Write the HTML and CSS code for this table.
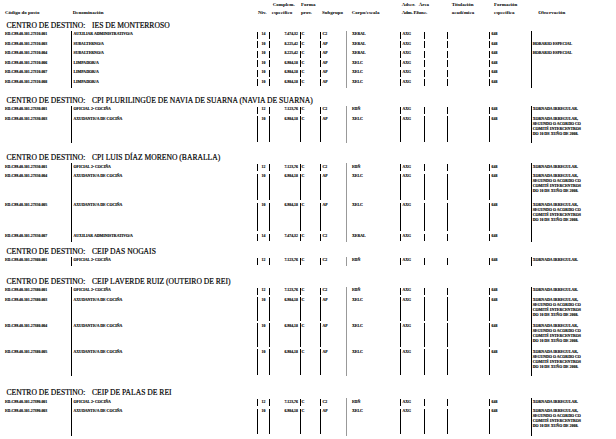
FILE: index.html
```html
<!DOCTYPE html>
<html lang="gl">
<head>
<meta charset="utf-8">
<title>Relación de postos</title>
<link rel="stylesheet" href="styles.css">
</head>
<body>
<div class="page">
  <div class="hdr">
    <div class="h h-code"><span></span><span>Código do posto</span></div>
    <div class="h h-den"><span></span><span>Denominación</span></div>
    <div class="h h-niv"><span></span><span>Niv.</span></div>
    <div class="h h-cmp"><span>Complem.</span><span>específico</span></div>
    <div class="h h-frm"><span>Forma</span><span>prov.</span></div>
    <div class="h h-sub"><span></span><span>Subgrupo</span></div>
    <div class="h h-crp"><span></span><span>Corpo/escala</span></div>
    <div class="h h-ads"><span>Adscr.</span><span class="adm">Adm. P.</span></div>
    <div class="h h-are"><span class="area">Área</span><span>func.</span></div>
    <div class="h h-tit"><span>Titulación</span><span>académica</span></div>
    <div class="h h-fes"><span>Formación</span><span>específica</span></div>
    <div class="h h-obs"><span></span><span>Observación</span></div>
  </div>

  <section class="sec s1">
    <div class="st"><span class="lbl">CENTRO DE DESTINO:</span><span>IES DE MONTERROSO</span></div>
    <div class="row">
      <div class="c code">ED.C99.40.101.27310.001</div><div class="c den">AUXILIAR ADMINISTRATIVO/A</div><div class="c niv s">14</div><div class="c cmp s">7.474,32</div><div class="c frm s">C</div><div class="c sub s">C2</div><div class="c crp">XERAL</div><div class="c ads s">AXG</div><div class="c are s"></div><div class="c tit s"></div><div class="c fes s">648</div><div class="c obs"></div>
    </div>
    <div class="row">
      <div class="c code">ED.C99.40.101.27310.003</div><div class="c den">SUBALTERNO/A</div><div class="c niv s">10</div><div class="c cmp s">8.225,42</div><div class="c frm s">C</div><div class="c sub s">AP</div><div class="c crp">XERAL</div><div class="c ads s">AXG</div><div class="c are s"></div><div class="c tit s"></div><div class="c fes s">648</div><div class="c obs">HORARIO ESPECIAL</div>
    </div>
    <div class="row">
      <div class="c code">ED.C99.40.101.27310.004</div><div class="c den">SUBALTERNO/A</div><div class="c niv s">10</div><div class="c cmp s">8.225,42</div><div class="c frm s">C</div><div class="c sub s">AP</div><div class="c crp">XERAL</div><div class="c ads s">AXG</div><div class="c are s"></div><div class="c tit s"></div><div class="c fes s">648</div><div class="c obs">HORARIO ESPECIAL</div>
    </div>
    <div class="row">
      <div class="c code">ED.C99.40.101.27310.006</div><div class="c den">LIMPADOR/A</div><div class="c niv s">10</div><div class="c cmp s">6.984,18</div><div class="c frm s">C</div><div class="c sub s">AP</div><div class="c crp">XELC</div><div class="c ads s">AXG</div><div class="c are s"></div><div class="c tit s"></div><div class="c fes s">648</div><div class="c obs"></div>
    </div>
    <div class="row">
      <div class="c code">ED.C99.40.101.27310.007</div><div class="c den">LIMPADOR/A</div><div class="c niv s">10</div><div class="c cmp s">6.984,18</div><div class="c frm s">C</div><div class="c sub s">AP</div><div class="c crp">XELC</div><div class="c ads s">AXG</div><div class="c are s"></div><div class="c tit s"></div><div class="c fes s">648</div><div class="c obs"></div>
    </div>
    <div class="row">
      <div class="c code">ED.C99.40.101.27310.008</div><div class="c den">LIMPADOR/A</div><div class="c niv s">10</div><div class="c cmp s">6.984,18</div><div class="c frm s">C</div><div class="c sub s">AP</div><div class="c crp">XELC</div><div class="c ads s">AXG</div><div class="c are s"></div><div class="c tit s"></div><div class="c fes s">648</div><div class="c obs"></div>
    </div>
  </section>

  <section class="sec s2">
    <div class="st"><span class="lbl">CENTRO DE DESTINO:</span><span>CPI PLURILINGÜE DE NAVIA DE SUARNA (NAVIA DE SUARNA)</span></div>
    <div class="row">
      <div class="c code">ED.C99.40.101.27330.001</div><div class="c den">OFICIAL 2ª COCIÑA</div><div class="c niv s">12</div><div class="c cmp s">7.123,76</div><div class="c frm s">C</div><div class="c sub s">C2</div><div class="c crp">EDÑ</div><div class="c ads s">AXG</div><div class="c are s"></div><div class="c tit s"></div><div class="c fes s">648</div><div class="c obs">XORNADA IRREGULAR.</div>
    </div>
    <div class="row t28">
      <div class="c code">ED.C99.40.101.27330.003</div><div class="c den">AXUDANTE/A DE COCIÑA</div><div class="c niv s">10</div><div class="c cmp s">6.984,18</div><div class="c frm s">C</div><div class="c sub s">AP</div><div class="c crp">XELC</div><div class="c ads s">AXG</div><div class="c are s"></div><div class="c tit s"></div><div class="c fes s">648</div><div class="c obs">XORNADA IRREGULAR,<br>SEGUNDO O ACORDO CO<br>COMITÉ INTERCENTROS<br>DO 10 DE XUÑO DE 2008.</div>
    </div>
  </section>

  <section class="sec s3">
    <div class="st"><span class="lbl">CENTRO DE DESTINO:</span><span>CPI LUIS DÍAZ MORENO (BARALLA)</span></div>
    <div class="row">
      <div class="c code">ED.C99.40.101.27350.001</div><div class="c den">OFICIAL 2ª COCIÑA</div><div class="c niv s">12</div><div class="c cmp s">7.123,76</div><div class="c frm s">C</div><div class="c sub s">C2</div><div class="c crp">EDÑ</div><div class="c ads s">AXG</div><div class="c are s"></div><div class="c tit s"></div><div class="c fes s">648</div><div class="c obs">XORNADA IRREGULAR.</div>
    </div>
    <div class="row t29">
      <div class="c code">ED.C99.40.101.27350.004</div><div class="c den">AXUDANTE/A DE COCIÑA</div><div class="c niv s">10</div><div class="c cmp s">6.984,18</div><div class="c frm s">C</div><div class="c sub s">AP</div><div class="c crp">XELC</div><div class="c ads s">AXG</div><div class="c are s"></div><div class="c tit s"></div><div class="c fes s">648</div><div class="c obs">XORNADA IRREGULAR,<br>SEGUNDO O ACORDO CO<br>COMITÉ INTERCENTROS<br>DO 10 DE XUÑO DE 2008.</div>
    </div>
    <div class="row t31">
      <div class="c code">ED.C99.40.101.27350.005</div><div class="c den">AXUDANTE/A DE COCIÑA</div><div class="c niv s">10</div><div class="c cmp s">6.984,18</div><div class="c frm s">C</div><div class="c sub s">AP</div><div class="c crp">XELC</div><div class="c ads s">AXG</div><div class="c are s"></div><div class="c tit s"></div><div class="c fes s">648</div><div class="c obs">XORNADA IRREGULAR,<br>SEGUNDO O ACORDO CO<br>COMITÉ INTERCENTROS<br>DO 10 DE XUÑO DE 2008.</div>
    </div>
    <div class="row">
      <div class="c code">ED.C99.40.101.27350.007</div><div class="c den">AUXILIAR ADMINISTRATIVO/A</div><div class="c niv s">14</div><div class="c cmp s">7.474,32</div><div class="c frm s">C</div><div class="c sub s">C2</div><div class="c crp">XERAL</div><div class="c ads s">AXG</div><div class="c are s"></div><div class="c tit s"></div><div class="c fes s">648</div><div class="c obs"></div>
    </div>
  </section>

  <section class="sec s4">
    <div class="st"><span class="lbl">CENTRO DE DESTINO:</span><span>CEIP DAS NOGAIS</span></div>
    <div class="row">
      <div class="c code">ED.C99.40.101.27360.001</div><div class="c den">OFICIAL 2ª COCIÑA</div><div class="c niv s">12</div><div class="c cmp s">7.123,76</div><div class="c frm s">C</div><div class="c sub s">C2</div><div class="c crp">EDÑ</div><div class="c ads s">AXG</div><div class="c are s"></div><div class="c tit s"></div><div class="c fes s">648</div><div class="c obs">XORNADA IRREGULAR.</div>
    </div>
  </section>

  <section class="sec s5">
    <div class="st"><span class="lbl">CENTRO DE DESTINO:</span><span>CEIP LAVERDE RUIZ (OUTEIRO DE REI)</span></div>
    <div class="row">
      <div class="c code">ED.C99.40.101.27380.001</div><div class="c den">OFICIAL 2ª COCIÑA</div><div class="c niv s">12</div><div class="c cmp s">7.123,76</div><div class="c frm s">C</div><div class="c sub s">C2</div><div class="c crp">EDÑ</div><div class="c ads s">AXG</div><div class="c are s"></div><div class="c tit s"></div><div class="c fes s">648</div><div class="c obs">XORNADA IRREGULAR.</div>
    </div>
    <div class="row t26">
      <div class="c code">ED.C99.40.101.27380.003</div><div class="c den">AXUDANTE/A DE COCIÑA</div><div class="c niv s">10</div><div class="c cmp s">6.984,18</div><div class="c frm s">C</div><div class="c sub s">AP</div><div class="c crp">XELC</div><div class="c ads s">AXG</div><div class="c are s"></div><div class="c tit s"></div><div class="c fes s">648</div><div class="c obs">XORNADA IRREGULAR,<br>SEGUNDO O ACORDO CO<br>COMITÉ INTERCENTROS<br>DO 10 DE XUÑO DE 2008.</div>
    </div>
    <div class="row t26">
      <div class="c code">ED.C99.40.101.27380.004</div><div class="c den">AXUDANTE/A DE COCIÑA</div><div class="c niv s">10</div><div class="c cmp s">6.984,18</div><div class="c frm s">C</div><div class="c sub s">AP</div><div class="c crp">XELC</div><div class="c ads s">AXG</div><div class="c are s"></div><div class="c tit s"></div><div class="c fes s">648</div><div class="c obs">XORNADA IRREGULAR,<br>SEGUNDO O ACORDO CO<br>COMITÉ INTERCENTROS<br>DO 10 DE XUÑO DE 2008.</div>
    </div>
    <div class="row t28">
      <div class="c code">ED.C99.40.101.27380.005</div><div class="c den">AXUDANTE/A DE COCIÑA</div><div class="c niv s">10</div><div class="c cmp s">6.984,18</div><div class="c frm s">C</div><div class="c sub s">AP</div><div class="c crp">XELC</div><div class="c ads s">AXG</div><div class="c are s"></div><div class="c tit s"></div><div class="c fes s">648</div><div class="c obs">XORNADA IRREGULAR,<br>SEGUNDO O ACORDO CO<br>COMITÉ INTERCENTROS<br>DO 10 DE XUÑO DE 2008.</div>
    </div>
  </section>

  <section class="sec s6">
    <div class="st"><span class="lbl">CENTRO DE DESTINO:</span><span>CEIP DE PALAS DE REI</span></div>
    <div class="row">
      <div class="c code">ED.C99.40.101.27390.001</div><div class="c den">OFICIAL 2ª COCIÑA</div><div class="c niv s">12</div><div class="c cmp s">7.123,76</div><div class="c frm s">C</div><div class="c sub s">C2</div><div class="c crp">EDÑ</div><div class="c ads s">AXG</div><div class="c are s"></div><div class="c tit s"></div><div class="c fes s">648</div><div class="c obs">XORNADA IRREGULAR.</div>
    </div>
    <div class="row t28">
      <div class="c code">ED.C99.40.101.27390.003</div><div class="c den">AXUDANTE/A DE COCIÑA</div><div class="c niv s">10</div><div class="c cmp s">6.984,18</div><div class="c frm s">C</div><div class="c sub s">AP</div><div class="c crp">XELC</div><div class="c ads s">AXG</div><div class="c are s"></div><div class="c tit s"></div><div class="c fes s">648</div><div class="c obs">XORNADA IRREGULAR,<br>SEGUNDO O ACORDO CO<br>COMITÉ INTERCENTROS<br>DO 10 DE XUÑO DE 2008.</div>
    </div>
  </section>
</div>
</body>
</html>
```

FILE: styles.css
```css
html, body {
  margin: 0;
  padding: 0;
  background: #fff;
}
body {
  width: 616px;
  height: 439px;
  overflow: hidden;
  font-family: "Liberation Serif", "Times New Roman", serif;
  color: #000;
}
.page {
  padding-top: 1px;
}

/* header */
.hdr {
  display: grid;
  grid-template-columns: 67.7px 185.3px 12.7px 30.3px 21px 29.7px 50px 15px 35px 42.3px 44.3px 1fr;
  padding-left: 5px;
  font-size: 5px;
  font-weight: bold;
  line-height: 7.5px;
}
.h {
  display: flex;
  flex-direction: column;
  white-space: nowrap;
}
.h span {
  height: 7.5px;
}
.h-cmp { margin-left: 1px; }
.h-cmp span:first-child { padding-left: 1px; }
.h-ads .adm { letter-spacing: -0.25px; }
.h-are .area { padding-left: 2px; }

/* section titles */
.s1 { margin-top: 4.5px; }
.s2 { margin-top: 8px; }
.s3 { margin-top: 10px; }
.s4 { margin-top: 4.5px; }
.s5 { margin-top: 10.5px; }
.s6 { margin-top: 12px; }

.st {
  display: flex;
  padding-left: 6.5px;
  font-size: 7.6px;
  font-weight: normal;
  -webkit-text-stroke: 0.18px #000;
  line-height: 9px;
  margin-bottom: 1px;
  white-space: nowrap;
}
.st .lbl {
  width: 85.5px;
}

/* rows */
.row {
  display: grid;
  grid-template-columns: 71px 186px 12px 30.5px 20.5px 26px 54px 24px 23px 42px 42px 1fr;
  height: 9.5px;
  font-size: 3.9px;
  font-weight: bold;
  line-height: 5px;
  white-space: nowrap;
  -webkit-text-stroke: 0.12px #000;
}
.row.t26 { height: 26px; }
.row.t28 { height: 28px; }
.row.t29 { height: 29px; }
.row.t31 { height: 31px; }

.c {
  padding-top: 1.5px;
}
.c.s {
  border-left: 1px solid #000;
  margin: 1px 0 1.5px;
  padding-top: 0.5px;
}
.code { padding-left: 5px; }
.den { border-left: 1px solid #000; padding-left: 1.5px; }
.niv { text-align: center; }
.cmp { text-align: right; padding-right: 1.5px; }
.frm { padding-left: 1px; }
.sub { padding-left: 1.5px; }
.crp { border-left: 1px solid #999; padding-left: 5px; }
.ads { padding-left: 1.5px; }
.fes { padding-left: 1.5px; }
.obs { border-left: 1px solid #000; padding-left: 0.7px; }
```
